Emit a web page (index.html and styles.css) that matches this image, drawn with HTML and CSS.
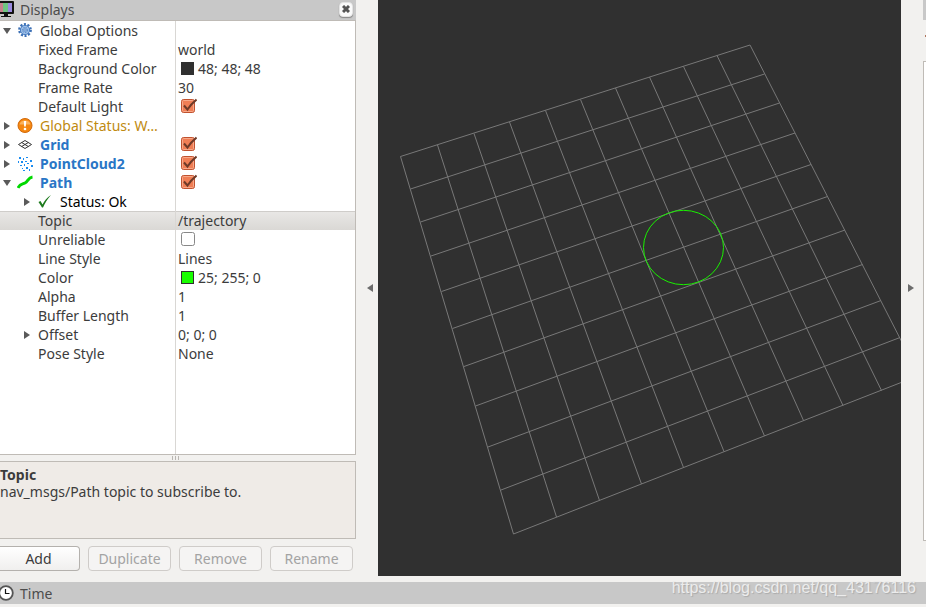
FILE: index.html
```
<!DOCTYPE html>
<html lang="en">
<head>
    <meta charset="UTF-8">
    <meta name="viewport" content="width=device-width, initial-scale=1.0">
    <title>RViz</title>
    <link rel="stylesheet" href="styles.css">
</head>
<body>
    <div class="workspace">
        <section class="displays">
            <header class="dock-title">
                <svg class="title-icon" width="14" height="18" viewBox="0 0 14 18">
                    <rect x="-3" y="1" width="17" height="13" rx="1" fill="#111"/>
                    <rect x="-1" y="3" width="4" height="9" fill="#c77f8c"/>
                    <rect x="3" y="3" width="5" height="9" fill="#6fc482"/>
                    <rect x="8" y="3" width="4" height="9" fill="#9a8ae0"/>
                    <path d="M4 14h4v2h3v1H1v-1h3z" fill="#111"/>
                </svg>
                <h2>Displays</h2>
                <button class="close" aria-label="Close Displays">
                    <svg width="8" height="8" viewBox="0 0 8 8"><path d="M1 1l6 6M7 1l-6 6" stroke="#555" stroke-width="3"/></svg>
                </button>
            </header>

            <div class="tree">
                <table>
                    <colgroup><col class="col-name"><col></colgroup>
                    <tbody>
                        <tr>
                            <td><div class="cell top"><button class="expander open" aria-label="Collapse Global Options"></button>
                                <svg class="icon" width="16" height="16" viewBox="0 0 16 16">
                                    <circle cx="8" cy="7" r="5.6" fill="none" stroke="#3b6fb5" stroke-width="2.6" stroke-dasharray="2 1.52"/>
                                    <circle cx="8" cy="7" r="4.6" fill="#9dbfe8" stroke="#4a7fc4"/>
                                    <circle cx="8" cy="7" r="2.6" fill="none" stroke="#5686c6" stroke-dasharray="1.5 1"/>
                                    <circle cx="8" cy="7" r="1.2" fill="#fff" stroke="#4a7fc4"/>
                                </svg>
                                <span>Global Options</span></div></td>
                            <td></td>
                        </tr>
                        <tr><td><div class="cell leaf">Fixed Frame</div></td><td>world</td></tr>
                        <tr><td><div class="cell leaf">Background Color</div></td><td><div class="color"><span class="swatch dark"></span>48; 48; 48</div></td></tr>
                        <tr><td><div class="cell leaf">Frame Rate</div></td><td>30</td></tr>
                        <tr><td><div class="cell leaf"><label for="default-light">Default Light</label></div></td><td><input type="checkbox" id="default-light" checked></td></tr>
                        <tr class="warning">
                            <td><div class="cell top"><button class="expander" aria-label="Expand Global Status"></button>
                                <svg class="icon" width="16" height="16" viewBox="0 0 16 16">
                                    <circle cx="8" cy="7.500" r="7" fill="#f5870f" stroke="#d2690a"/>
                                    <path d="M2.500 6.500a5.600 5 0 0 1 11 0z" fill="#fbb35c"/>
                                    <path d="M6.800 3h2.400l-.4 5.500H7.200z" fill="#fff"/>
                                    <circle cx="8" cy="11" r="1.300" fill="#fff"/>
                                </svg>
                                <span>Global Status: W…</span></div></td>
                            <td></td>
                        </tr>
                        <tr class="display">
                            <td><div class="cell top"><button class="expander" aria-label="Expand Grid"></button>
                                <svg class="icon" width="16" height="16" viewBox="0 0 16 16" fill="none" stroke="#333">
                                    <path d="M1.500 7.500L8 3.500l6.500 4L8 11.500zM4.700 5.500l6.600 4M11.300 5.500l-6.600 4"/>
                                </svg>
                                <label for="grid">Grid</label></div></td>
                            <td><input type="checkbox" id="grid" checked></td>
                        </tr>
                        <tr class="display">
                            <td><div class="cell top"><button class="expander" aria-label="Expand PointCloud2"></button>
                                <svg class="icon" width="16" height="16" viewBox="0 0 16 16" fill="#1c8cf0">
                                    <path d="M2 1h2v2H2zM6 2h1v2H6zM9 1h2v1H9zM13 4h2v2h-2zM1 5h1v2H1zM4 5h2v2H4zM8 5h2v1H8zM10 7h2v1h-2zM3 9h2v1H3zM7 8h1v2H7zM14 9h2v2h-2zM5 12h1v1H5zM9 11h2v2H9zM6 14h2v1H6zM12 13h1v2h-1z"/>
                                </svg>
                                <label for="pointcloud">PointCloud2</label></div></td>
                            <td><input type="checkbox" id="pointcloud" checked></td>
                        </tr>
                        <tr class="display">
                            <td><div class="cell top"><button class="expander open" aria-label="Collapse Path"></button>
                                <svg class="icon" width="16" height="16" viewBox="0 0 16 16" fill="none" stroke="#00d800" stroke-width="3">
                                    <path d="M1 13C3 8.500 5 9.500 8 8S11 2.500 15.500 2"/>
                                </svg>
                                <label for="path">Path</label></div></td>
                            <td><input type="checkbox" id="path" checked></td>
                        </tr>
                        <tr class="status">
                            <td><div class="cell nested"><button class="expander" aria-label="Expand Status"></button>
                                <svg class="icon" width="16" height="16" viewBox="0 0 16 16">
                                    <path d="M1.500 8l2-1 2 3.500C7.500 6.500 10 3.500 14 1 10.500 5 8 9 6 13.500H5z" fill="#1d7a1d"/>
                                </svg>
                                <span>Status: Ok</span></div></td>
                            <td></td>
                        </tr>
                        <tr class="selected"><td><div class="cell leaf">Topic</div></td><td>/trajectory</td></tr>
                        <tr><td><div class="cell leaf"><label for="unreliable">Unreliable</label></div></td><td><input type="checkbox" id="unreliable"></td></tr>
                        <tr><td><div class="cell leaf">Line Style</div></td><td>Lines</td></tr>
                        <tr><td><div class="cell leaf">Color</div></td><td><div class="color"><span class="swatch green"></span>25; 255; 0</div></td></tr>
                        <tr><td><div class="cell leaf">Alpha</div></td><td>1</td></tr>
                        <tr><td><div class="cell leaf">Buffer Length</div></td><td>1</td></tr>
                        <tr><td><div class="cell nested"><button class="expander" aria-label="Expand Offset"></button>Offset</div></td><td>0; 0; 0</td></tr>
                        <tr><td><div class="cell leaf">Pose Style</div></td><td>None</td></tr>
                        <tr class="filler"><td></td><td></td></tr>
                    </tbody>
                </table>
            </div>

            <div class="grip"><i></i><i></i><i></i></div>

            <div class="help">
                <h3>Topic</h3>
                <p>nav_msgs/Path topic to subscribe to.</p>
            </div>

            <div class="actions">
                <button>Add</button>
                <button disabled>Duplicate</button>
                <button disabled>Remove</button>
                <button disabled>Rename</button>
            </div>
        </section>

        <button class="collapse left" aria-label="Hide left dock"></button>

        <main class="viewport">
            <svg viewBox="0 0 523 576" preserveAspectRatio="xMidYMid slice">
                <!-- ground plane, 10 x 10 cells -->
                <g class="ground">
                    <path d="M22.500 156.500L135.500 534M59.500 145L178.500 517M96 133.500L221.500 500.500M131.500 122L263.500 484M167.500 110.500L305.500 467.500M202.500 99.500L346 451.500M237.500 88L386.500 436M271.500 77L425.500 420.500M305.500 66.500L465 405.500M339 55.500L503.500 390.500M372 45L541 375.500"/>
                    <path d="M22.500 156.500L372 45M32.500 189L386.500 74M42.500 222L401.500 103M53 256L417 133M63.500 291.500L433 164.500M74.500 328.500L449.500 196.500M86 366.500L467 230M97.500 406L484.500 264.500M110 447L503 300.500M123 490L522 337.500M135.500 534L541 375.500"/>
                </g>
                <ellipse class="trajectory" cx="305.500" cy="247.500" rx="40" ry="37.200"/>
            </svg>
        </main>

        <button class="collapse right" aria-label="Hide right dock"></button>

        <aside class="views">
            <div class="views-title"></div>
            <div class="views-type"></div>
            <div class="views-list"></div>
        </aside>
    </div>

    <footer class="time">
        <svg class="title-icon" width="14" height="16" viewBox="0 0 14 16">
            <circle cx="6" cy="8" r="6.800" fill="#fff" stroke="#555" stroke-width="1.800"/>
            <path d="M5.500 4v4.500h4" fill="none" stroke="#111" stroke-width="1.200"/>
        </svg>
        <h2>Time</h2>
        <span class="watermark">https://blog.csdn.net/qq_43176116</span>
    </footer>
</body>
</html>
```
FILE: styles.css
```
:root {
    --window: #f2f1ef;
    --title: #c8c8c8;
    --border: #bfbbb6;
    --text: #3c3c3c;
    --row: 19px;
}

* {
    margin: 0;
    padding: 0;
    box-sizing: border-box;
}

body {
    display: flex;
    flex-direction: column;
    height: 100vh;
    overflow: hidden;
    background: var(--window);
    color: var(--text);
    font-family: "Noto Sans", "Open Sans", sans-serif;
    font-size: 14px;
    line-height: 17px;
}

button,
input {
    font: inherit;
    color: inherit;
}

h2 {
    font-size: 14px;
    font-weight: normal;
    color: #4c4c4c;
}

.workspace {
    display: flex;
    flex: 1;
    min-height: 0;
}

.displays {
    display: flex;
    flex-direction: column;
    flex: 0 0 356px;
    padding-bottom: 11px;
}

.dock-title {
    display: flex;
    align-items: center;
    height: 20px;
    padding: 0 3px 2px 0;
    background: var(--title);
}

.title-icon {
    flex: none;
    margin-right: 6px;
}

.close {
    display: flex;
    align-items: center;
    justify-content: center;
    width: 14px;
    height: 15px;
    margin-left: auto;
    background: #fafafa;
    border: 1px solid #e4e4e4;
    border-radius: 4px;
    box-shadow: 0 1px 1px #888;
}

/* property tree */
.tree {
    flex: 1;
    min-height: 0;
    background: #fff;
    border: 1px solid var(--border);
    border-left: 0;
}

table {
    width: 100%;
    height: 100%;
    table-layout: fixed;
    border-collapse: separate;
    border-spacing: 0;
}

.col-name {
    width: 176px;
}

tr {
    height: var(--row);
}

.filler {
    height: auto;
}

td {
    vertical-align: middle;
    white-space: nowrap;
}

td:first-child {
    border-right: 1px solid #d9d7d4;
}

td:last-child {
    padding-left: 2px;
}

.cell {
    display: flex;
    align-items: center;
}

.top {
    padding-left: 2px;
}

.leaf {
    padding-left: 38px;
}

.nested {
    padding-left: 22px;
}

.icon {
    flex: none;
    margin: 0 7px 0 -1px;
}

.expander {
    display: flex;
    align-items: center;
    justify-content: center;
    flex: none;
    width: 16px;
    height: 16px;
    padding-right: 6px;
    background: none;
    border: 0;
}

.expander::before {
    content: "";
    border: 4px solid transparent;
    border-left: 6px solid #5a5a5a;
    border-right: 0;
}

.expander.open::before {
    border: 4px solid transparent;
    border-top: 6px solid #5a5a5a;
    border-bottom: 0;
}

.warning {
    color: #c08a10;
}

.display {
    color: #2a76c6;
    font-weight: bold;
}

.status {
    color: #000;
}

.selected td {
    background: linear-gradient(#e9e8e6, #dad8d5);
    box-shadow: inset 0 1px #cfcdca;
}

.color {
    display: flex;
    align-items: center;
    gap: 4px;
    padding-left: 3px;
}

.swatch {
    width: 13px;
    height: 13px;
    border: 1px solid #303030;
}

.swatch.dark {
    background: #303030;
}

.swatch.green {
    background: #19ff00;
}

input[type="checkbox"] {
    display: block;
    appearance: none;
    width: 16px;
    height: 17px;
    margin-left: 3px;
    background: url("data:image/svg+xml,%3Csvg xmlns='http://www.w3.org/2000/svg' width='16' height='16'%3E%3Crect x='.5' y='1.5' width='13' height='13' rx='2' fill='%23fff' stroke='%23888'/%3E%3C/svg%3E") no-repeat;
}

input[type="checkbox"]:checked {
    background-image: url("data:image/svg+xml,%3Csvg xmlns='http://www.w3.org/2000/svg' width='16' height='16'%3E%3Crect x='.5' y='1.5' width='13' height='13' rx='2' fill='%23f07e55' stroke='%23c0522f'/%3E%3Crect x='1.5' y='2.5' width='11' height='11' rx='1' fill='none' stroke='%23f7a98a'/%3E%3Cpath d='M3 7.500l3.500 4Q10 6 15.500 1.500' fill='none' stroke='%236e3a28' stroke-width='2'/%3E%3C/svg%3E");
}

.grip {
    display: flex;
    align-items: center;
    justify-content: center;
    gap: 2px;
    height: 6px;
    padding-right: 6px;
}

.grip i {
    width: 1px;
    height: 4px;
    background: #b9b6b2;
}

.help {
    height: 78px;
    padding-top: 4px;
    background: #efebe7;
    border: 1px solid var(--border);
    border-left: 0;
}

.help h3 {
    font-size: 14px;
}

.actions {
    display: grid;
    grid-template-columns: 80px repeat(3, 1fr);
    gap: 8px;
    padding: 7px 3px 0 0;
}

.actions button {
    height: 25px;
    background: linear-gradient(#fff, #f0efee);
    border: 1px solid #b4b1ad;
    border-radius: 4px;
}

.actions button:first-child {
    padding-right: 2px;
    border-left: 0;
    border-radius: 0 4px 4px 0;
}

.actions button:disabled {
    color: #a3a3a3;
    background: #f5f4f3;
    border-color: #cfccc9;
}

.collapse {
    display: flex;
    align-items: center;
    flex: none;
    width: 22px;
    padding-bottom: 6px;
    background: none;
    border: 0;
}

.collapse::before {
    content: "";
    border: 4px solid transparent;
}

.collapse.left {
    justify-content: flex-end;
    padding-right: 5px;
}

.collapse.left::before {
    border-right: 6px solid #6c6c6c;
    border-left: 0;
}

.collapse.right {
    padding-left: 7px;
}

.collapse.right::before {
    border-left: 6px solid #6c6c6c;
    border-right: 0;
}

/* 3D view */
.viewport {
    flex: 1;
    min-width: 0;
    margin-bottom: 6px;
    background: #303030;
}

.viewport svg {
    display: block;
    width: 100%;
    height: 100%;
}

.ground {
    fill: none;
    stroke: #787878;
}

.trajectory {
    fill: none;
    stroke: #19f000;
}

.views {
    display: flex;
    flex-direction: column;
    flex: 0 0 3px;
    padding-bottom: 41px;
}

.views-title {
    height: 20px;
    background: var(--title);
}

.views-type {
    width: 1px;
    height: 2px;
    margin: 15px 0 24px auto;
    background: #b0765e;
}

.views-list {
    flex: 1;
    background: #fff;
    border: 1px solid var(--border);
    border-right: 0;
}

.time {
    position: relative;
    display: flex;
    align-items: center;
    height: 22px;
    margin-bottom: 3px;
    background: var(--title);
}

.watermark {
    position: absolute;
    right: 10px;
    top: -3px;
    color: #ececec;
    font-family: "Liberation Sans", sans-serif;
    font-size: 16px;
    text-shadow: 1px 1px 1px #aaa;
}
```
